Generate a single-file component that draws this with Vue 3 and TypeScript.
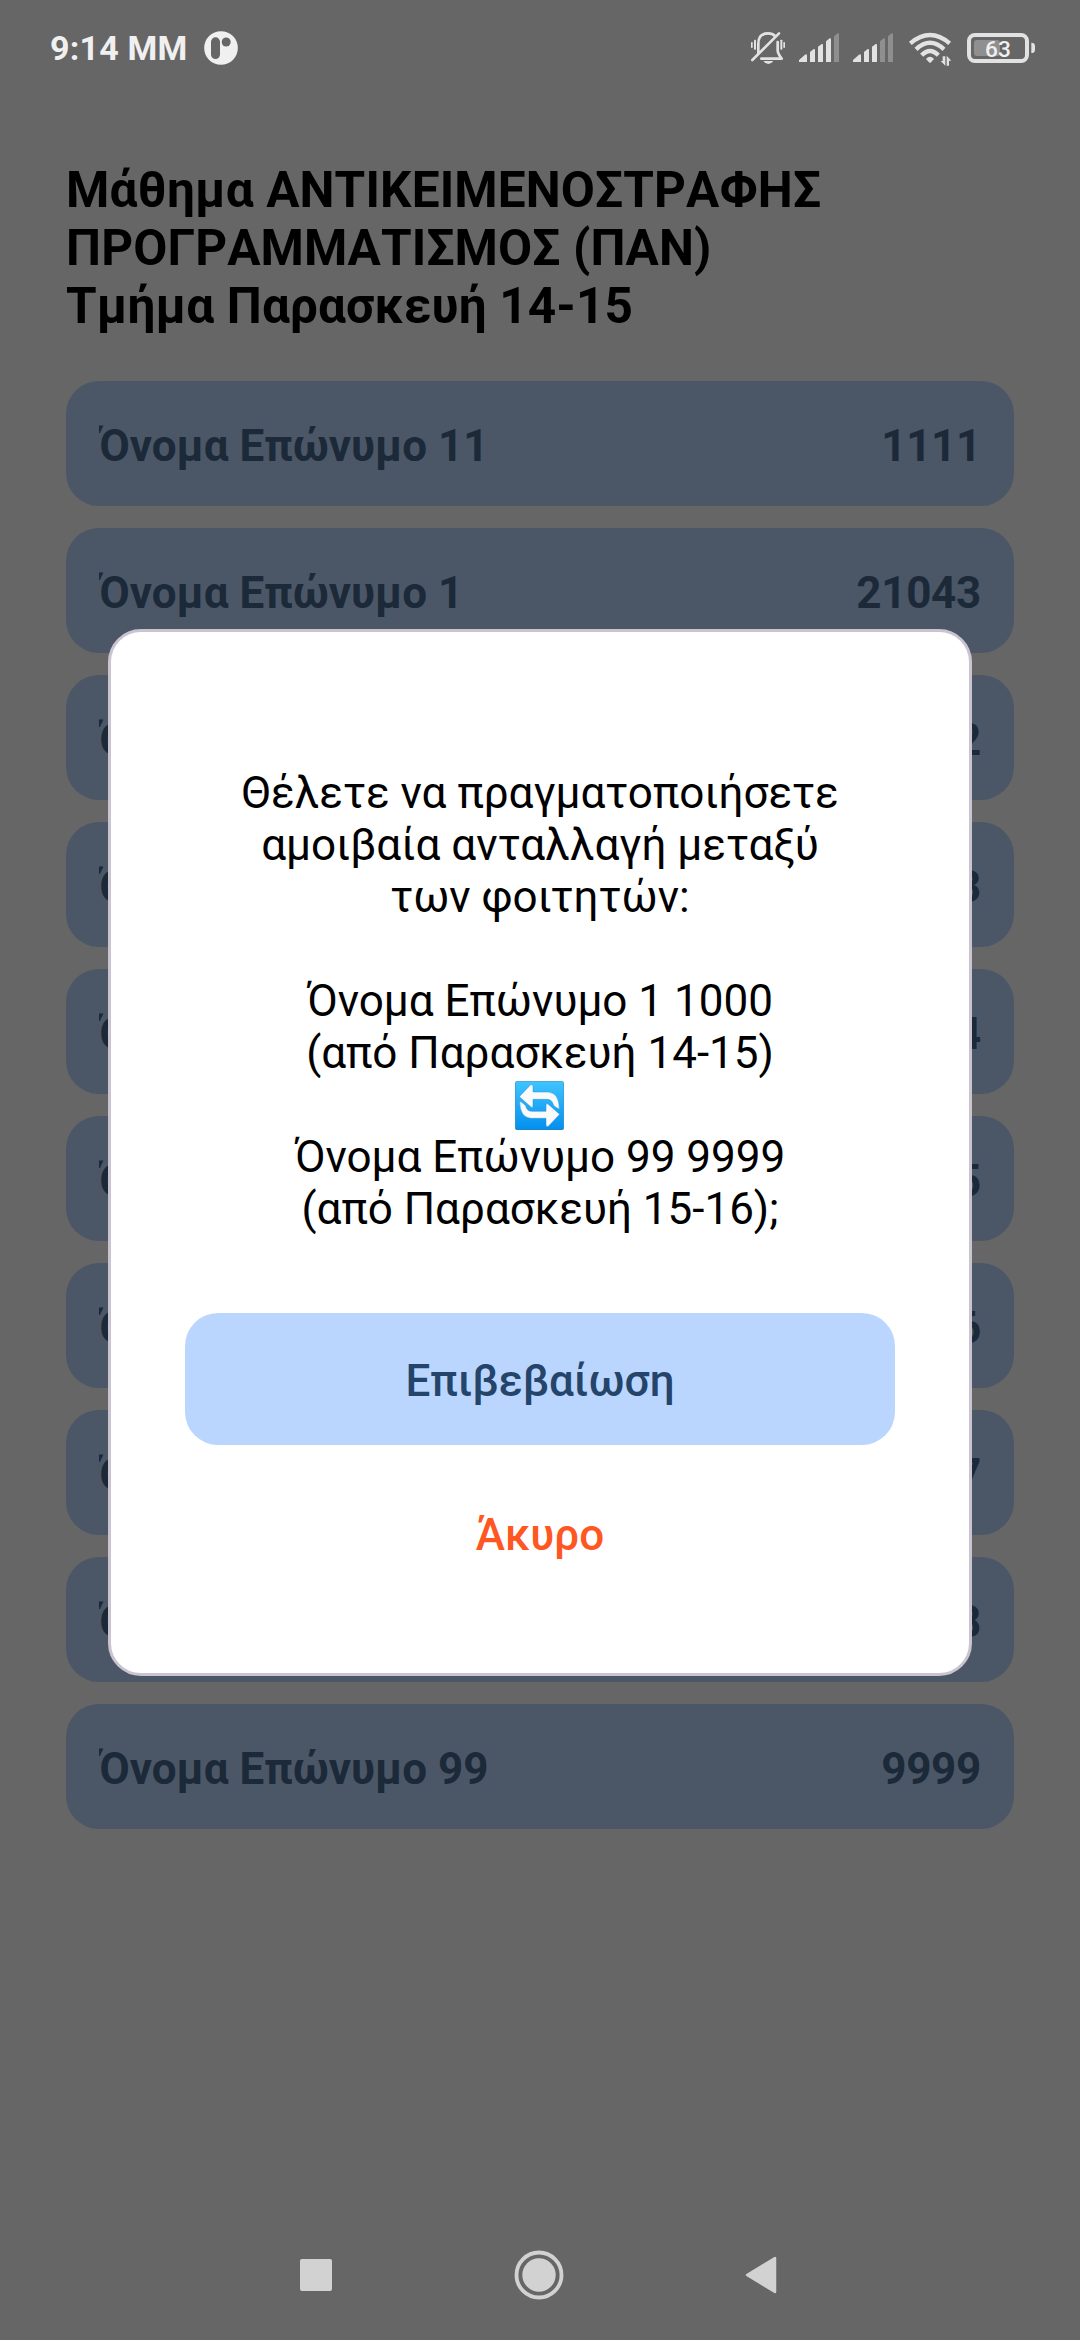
<script setup lang="ts">
interface Student {
  name: string
  code: string
}

const heading: string[] = [
  'Μάθημα ΑΝΤΙΚΕΙΜΕΝΟΣΤΡΑΦΗΣ',
  'ΠΡΟΓΡΑΜΜΑΤΙΣΜΟΣ (ΠΑΝ)',
  'Τμήμα Παρασκευή 14-15',
]

const students: Student[] = [
  { name: 'Όνομα Επώνυμο 11', code: '1111' },
  { name: 'Όνομα Επώνυμο 1', code: '21043' },
  { name: 'Όνομα Επώνυμο 22', code: '2222' },
  { name: 'Όνομα Επώνυμο 33', code: '3333' },
  { name: 'Όνομα Επώνυμο 44', code: '4444' },
  { name: 'Όνομα Επώνυμο 55', code: '5555' },
  { name: 'Όνομα Επώνυμο 66', code: '6666' },
  { name: 'Όνομα Επώνυμο 77', code: '7777' },
  { name: 'Όνομα Επώνυμο 88', code: '8888' },
  { name: 'Όνομα Επώνυμο 99', code: '9999' },
]

const signalLevels: number[] = [4, 3]
const signalBars: string[] = [
  'M237 156V150L255 134Q261 131 261 137V156Z',
  'M270 156V126L281 117Q285 116 285 120V156Z',
  'M294 156V110L305 102Q309 101 309 105V156Z',
  'M318 156V94L329 85Q333 84 333 88V156Z',
  'M342 156V79L353 70Q357 69 357 73V156Z',
]
</script>

<template>
  <div class="screen">
    <header class="status">
      <div class="status-left">
        <span class="clock">9:14 ΜΜ</span>
        <svg class="app-badge" viewBox="0 0 102 102">
          <circle cx="51" cy="51" r="50.5" fill="#f0f0f0" />
          <rect x="21" y="19" width="27" height="65" rx="13.5" fill="#666" />
          <circle cx="66.500" cy="33" r="13.500" fill="#666" />
        </svg>
      </div>
      <div class="status-right">
        <svg width="36" height="38" viewBox="90 60 108 114">
          <g fill="none" stroke="#e2e2e2" stroke-width="8" stroke-linecap="round">
            <path d="M115 128V101Q115 70 144 70Q158 70 165 78" />
            <path d="M173 96V121Q173 131 185 146H124" stroke-linejoin="round" />
            <path d="M97 150L177 70" />
          </g>
          <g fill="#e2e2e2">
            <rect x="93" y="96" width="5" height="18" rx="2" />
            <rect x="102" y="89" width="6" height="30" rx="2" />
            <rect x="181" y="89" width="6" height="30" rx="2" />
            <rect x="190" y="96" width="5" height="18" rx="2" />
            <path d="M130 153H160Q154 162 145 162T130 153Z" />
          </g>
        </svg>
        <svg
          v-for="level in signalLevels"
          :key="level"
          width="42"
          height="38"
          viewBox="234 60 126 114"
        >
          <path
            v-for="(bar, i) in signalBars"
            :key="i"
            :d="bar"
            :fill="i < level ? '#e2e2e2' : '#8f8f8f'"
          />
        </svg>
        <svg class="wifi" width="45" height="38" viewBox="564 60 135 114">
          <g fill="none" stroke="#e2e2e2" stroke-width="13">
            <path d="M571 100Q630 50 689 100" />
            <path d="M588 118Q630 79 672 118" />
            <path d="M605 136Q630 110 655 136" />
          </g>
          <path d="M618 147Q630 134 642 147L633 157Q630 160 627 157Z" fill="#e2e2e2" />
          <path
            d="M668 139H676V167L662 153H668ZM680 167V137L694 152H687V167Z"
            fill="#e2e2e2"
          />
        </svg>
        <svg width="70" height="38" viewBox="738 60 210 114">
          <rect x="762" y="90" width="78" height="48" rx="9" fill="#8f8f8f" />
          <rect
            x="747"
            y="75"
            width="174"
            height="78"
            rx="18"
            fill="none"
            stroke="#e2e2e2"
            stroke-width="12"
          />
          <path d="M934 98Q945 98 945 108V119Q945 129 934 129Z" fill="#e2e2e2" />
          <text x="834" y="140" class="charge">63</text>
        </svg>
      </div>
    </header>

    <main class="content">
      <h1 class="title">
        <span v-for="line in heading" :key="line">{{ line }}</span>
      </h1>
      <ul class="list">
        <li v-for="s in students" :key="s.name" class="card">
          <span class="name">{{ s.name }}</span>
          <span class="code">{{ s.code }}</span>
        </li>
      </ul>
    </main>

    <nav class="nav">
      <svg width="32" height="32" viewBox="0 0 32 32">
        <rect width="32" height="32" rx="2" fill="#d2d2d2" />
      </svg>
      <svg width="50" height="50" viewBox="0 0 50 50">
        <circle cx="25" cy="25" r="22.5" fill="none" stroke="#d2d2d2" stroke-width="3.8" />
        <circle cx="25" cy="25" r="16.7" fill="#d2d2d2" />
      </svg>
      <svg width="32" height="38" viewBox="0 0 32 38">
        <path
          d="M2 19L30 2V36Z"
          fill="#d2d2d2"
          stroke="#d2d2d2"
          stroke-width="2.500"
          stroke-linejoin="round"
        />
      </svg>
    </nav>

    <div class="overlay">
      <section class="dialog" role="dialog">
        <div class="message">
          <p>Θέλετε να πραγματοποιήσετε<br />αμοιβαία ανταλλαγή μεταξύ<br />των φοιτητών:</p>
          <p>Όνομα Επώνυμο 1 1000<br />(από Παρασκευή 14-15)</p>
          <div class="swap">
            <svg width="49" height="49" viewBox="168 62 147 147">
              <defs>
                <linearGradient id="swapFill" x1="0" y1="0" x2="0" y2="1">
                  <stop offset="0" stop-color="#40c4ff" />
                  <stop offset="1" stop-color="#0390ee" />
                </linearGradient>
              </defs>
              <rect x="168.500" y="63" width="146" height="146" rx="5" fill="#1c85c4" />
              <rect x="170" y="64" width="143" height="142" rx="4" fill="url(#swapFill)" />
              <g fill="#fafafa" stroke="#2196d8" stroke-width="1.500">
                <path
                  d="M182 108L215 73Q222 70 222 78V95H268Q301 98 301 147Q290 142 283 134Q280 117 263 117H222V137Q221 145 215 139L182 110Z"
                />
                <path
                  d="M301 163L268 198Q261 201 261 193V174H215Q182 171 182 122Q191 127 200 136Q203 153 220 153H261V134Q262 126 268 132L301 161Z"
                />
              </g>
            </svg>
          </div>
          <p>Όνομα Επώνυμο 99 9999<br />(από Παρασκευή 15-16);</p>
        </div>
        <button class="confirm" type="button">Επιβεβαίωση</button>
        <button class="cancel" type="button">Άκυρο</button>
      </section>
    </div>
  </div>
</template>

<style>
html,
body {
  background: #666;
}
</style>

<style scoped>
.screen {
  position: relative;
  display: flex;
  flex-direction: column;
  box-sizing: border-box;
  width: 1080px;
  height: 2340px;
  overflow: hidden;
  background: #666;
  font-family: Roboto, 'Liberation Sans', sans-serif;
}

.status {
  display: flex;
  justify-content: space-between;
  box-sizing: border-box;
  height: 96px;
  padding: 0 44px 0 50px;
}

.status-left {
  display: flex;
  align-items: center;
  gap: 17px;
}

.clock {
  color: #f0f0f0;
  font-size: 34px;
  font-weight: 700;
  letter-spacing: 0.2px;
  line-height: 40px;
}

.app-badge {
  width: 34px;
  height: 34px;
}

.status-right {
  display: flex;
  gap: 12px;
  padding-top: 30px;
}

.wifi {
  margin: 0 1px 0 2px;
}

.charge {
  fill: #f0f0f0;
  font-size: 68px;
  font-weight: 500;
  text-anchor: middle;
}

.content {
  flex: 1;
  padding: 65px 66px 0;
}

.title {
  display: flex;
  flex-direction: column;
  margin: 0;
  color: #000;
  font-size: 49.5px;
  font-kerning: none;
  font-weight: 700;
  letter-spacing: 0.14px;
  line-height: 58px;
  white-space: nowrap;
}

.list {
  display: flex;
  flex-direction: column;
  gap: 22px;
  margin: 46px 0 0;
  padding: 0;
  list-style: none;
}

.card {
  display: flex;
  align-items: center;
  justify-content: space-between;
  box-sizing: border-box;
  height: 125px;
  padding: 5px 33px 0;
  border-radius: 33px;
  background: #4b5767;
  color: #1c2938;
  font-size: 44px;
  font-weight: 700;
  line-height: 52px;
}

.name {
  overflow: hidden;
}

.code {
  letter-spacing: -0.3px;
}

.nav {
  display: flex;
  align-items: center;
  justify-content: space-between;
  height: 130px;
  padding: 0 303px 0 300px;
}

.overlay {
  position: absolute;
  inset: 0;
  display: flex;
  align-items: flex-start;
  justify-content: center;
  padding-top: 629px;
}

.dialog {
  display: flex;
  flex-direction: column;
  align-items: center;
  box-sizing: border-box;
  width: 864px;
  height: 1047px;
  padding: 135px 74px 0;
  border: 3px solid #cac4d0;
  border-radius: 33px;
  background: #fff;
}

.message {
  color: #000;
  font-size: 44px;
  line-height: 52px;
  text-align: center;
  white-space: nowrap;
}

.message p {
  margin: 0;
}

.message p:first-child {
  margin-bottom: 52px;
}

.swap {
  display: flex;
  align-items: center;
  justify-content: center;
  height: 52px;
}

.confirm,
.cancel {
  border: 0;
  font-family: inherit;
  font-size: 44px;
  font-weight: 500;
  line-height: 52px;
}

.confirm {
  align-self: stretch;
  height: 132px;
  margin-top: 78px;
  padding: 4px 0 0;
  border-radius: 33px;
  background: #bad6ff;
  color: #244469;
}

.cancel {
  height: 132px;
  margin-top: 22px;
  padding: 4px 33px 0;
  background: transparent;
  color: #ff5722;
}
</style>
